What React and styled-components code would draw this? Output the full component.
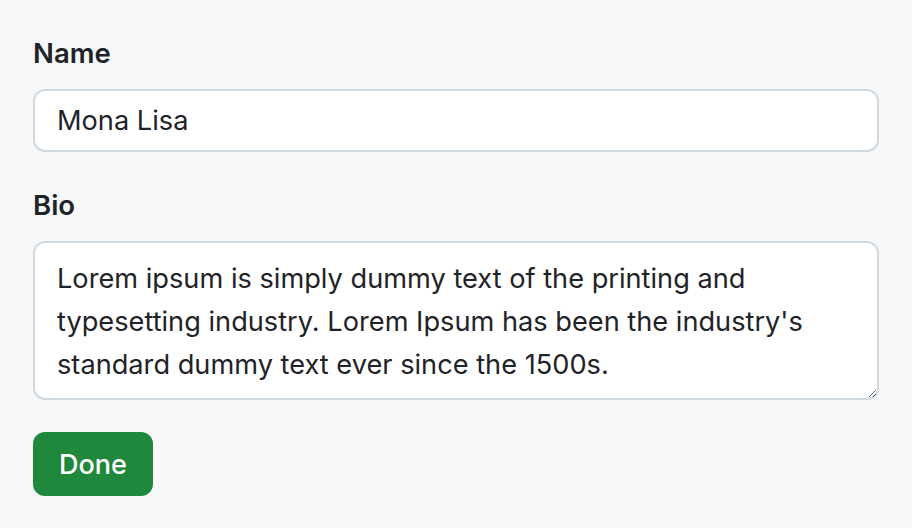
import React, { useState } from "react";
import styled, { createGlobalStyle } from "styled-components";

const GlobalStyle = createGlobalStyle`
  html, body {
    margin: 0;
    padding: 0;
    background: #f6f8fa;
  }
  body {
    font-family: Inter, "Noto Sans", "Liberation Sans", sans-serif;
    color: #1f2328;
  }
`;

const Form = styled.form`
  display: flex;
  flex-direction: column;
  padding: 33px 33px;
  width: 912px;
  box-sizing: border-box;
`;

const Field = styled.div`
  display: flex;
  flex-direction: column;
  gap: 16px;
  margin-bottom: ${(p) => p.spacing || 30}px;
`;

const Label = styled.label`
  font-size: 27.5px;
  font-weight: 600;
  line-height: 40px;
  color: #1f2328;
`;

const inputBase = `
  box-sizing: border-box;
  width: 100%;
  font-family: Inter, "Noto Sans", "Liberation Sans", sans-serif;
  font-size: 27.2px;
  color: #1f2328;
  background: #ffffff;
  border: 2px solid #d1d9e0;
  border-radius: 12px;
  outline: none;
`;

const TextInput = styled.input`
  ${inputBase}
  height: 63px;
  padding: 0 22px;
`;

const TextArea = styled.textarea`
  ${inputBase}
  height: 159px;
  padding: 14px 22px 12px;
  line-height: 43px;
  resize: vertical;
`;

const Button = styled.button`
  align-self: flex-start;
  width: 120px;
  height: 64px;
  border: none;
  border-radius: 12px;
  background: #1f883d;
  color: #ffffff;
  font-family: Inter, "Noto Sans", "Liberation Sans", sans-serif;
  font-size: 27px;
  font-weight: 500;
  cursor: pointer;
`;

export default function App() {
  const [name, setName] = useState("Mona Lisa");
  const [bio, setBio] = useState(
    "Lorem ipsum is simply dummy text of the printing and typesetting industry. Lorem Ipsum has been the industry's standard dummy text ever since the 1500s."
  );

  return (
    <>
      <GlobalStyle />
      <Form onSubmit={(e) => e.preventDefault()}>
        <Field spacing={33}>
          <Label htmlFor="name">Name</Label>
          <TextInput id="name" value={name} onChange={(e) => setName(e.target.value)} />
        </Field>
        <Field spacing={32}>
          <Label htmlFor="bio">Bio</Label>
          <TextArea id="bio" value={bio} onChange={(e) => setBio(e.target.value)} />
        </Field>
        <Button type="submit">Done</Button>
      </Form>
    </>
  );
}
